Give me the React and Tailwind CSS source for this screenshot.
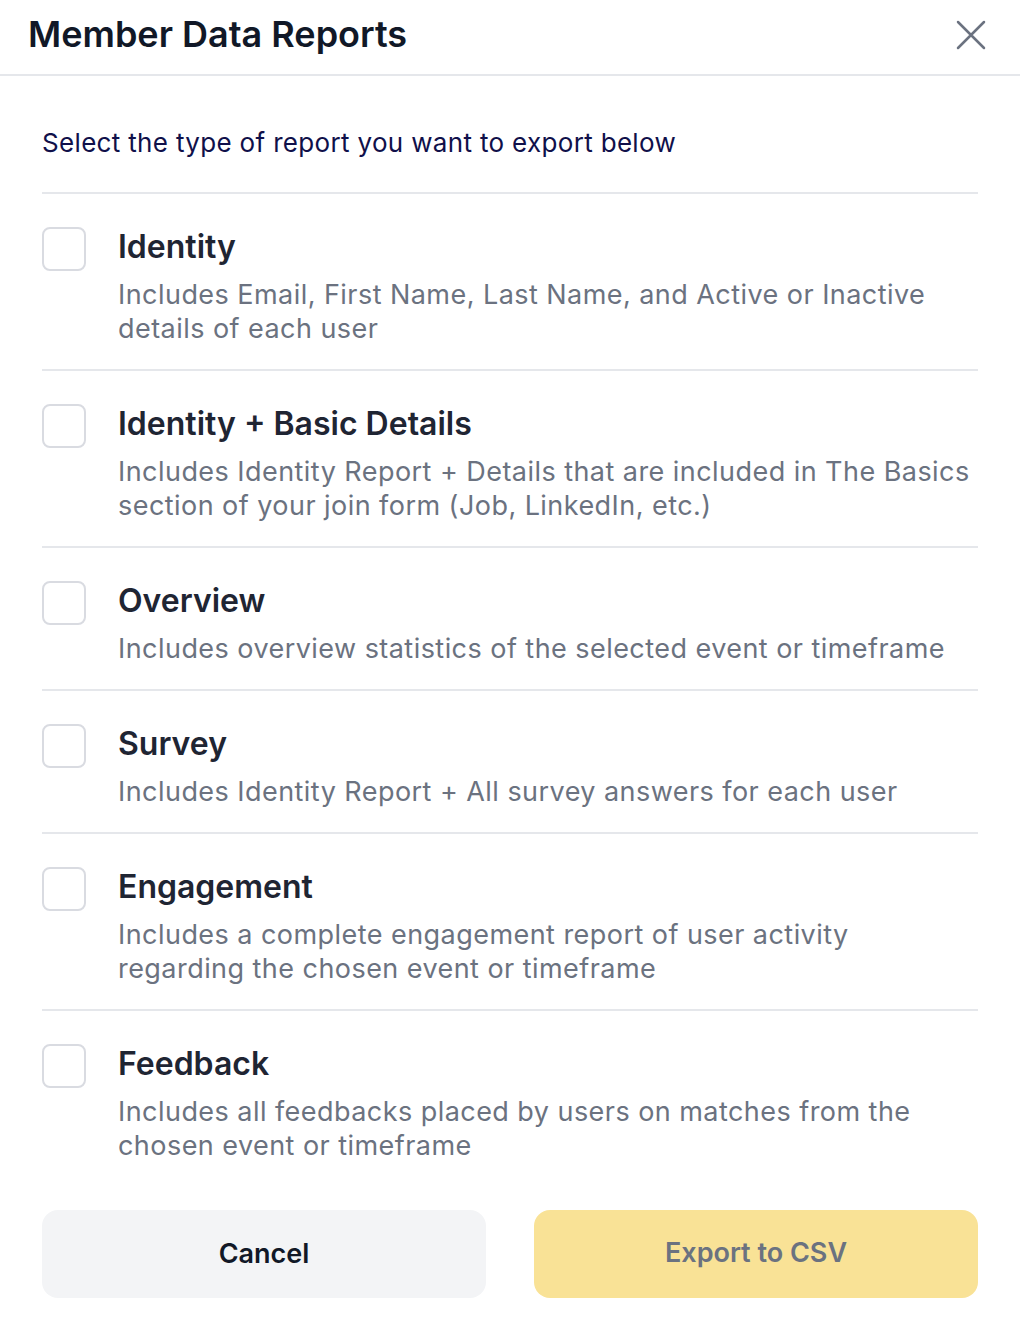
const reports = [
  {
    title: 'Identity',
    description: 'Includes Email, First Name, Last Name, and Active or Inactive details of each user',
  },
  {
    title: 'Identity + Basic Details',
    description:
      'Includes Identity Report + Details that are included in The Basics section of your join form (Job, LinkedIn, etc.)',
  },
  {
    title: 'Overview',
    description: 'Includes overview statistics of the selected event or timeframe',
  },
  {
    title: 'Survey',
    description: 'Includes Identity Report + All survey answers for each user',
  },
  {
    title: 'Engagement',
    description: 'Includes a complete engagement report of user activity regarding the chosen event or timeframe',
  },
  {
    title: 'Feedback',
    description: 'Includes all feedbacks placed by users on matches from the chosen event or timeframe',
  },
];

function App() {
  return (
    <div className="min-h-screen w-full bg-white font-['Inter',sans-serif]">
      {/* Header */}
      <div className="h-[76px] flex items-center justify-between pl-[28px] pr-[34px] border-b-2 border-[#e5e7eb]">
        <h1 className="text-[36px] leading-[40px] font-semibold text-[#111827] pb-[6px]">Member Data Reports</h1>
        <button className="text-[#6b7280] pb-[4px]">
          <svg width="30" height="30" viewBox="0 0 30 30" fill="none" stroke="currentColor" strokeWidth="2.5" strokeLinecap="round">
            <path d="M2 2L28 28M28 2L2 28" />
          </svg>
        </button>
      </div>

      {/* Content */}
      <div className="px-[42px]">
        <p className="pt-[50px] pb-[32px] text-[26px] leading-[34px] text-[#10104a] tracking-[0.33px] border-b-2 border-[#e5e7eb]">
          Select the type of report you want to export below
        </p>

        {reports.map((report, i) => (
          <div
            key={report.title}
            className={`flex gap-[32px] pt-[33px] pb-[23px] ${i < reports.length - 1 ? 'border-b-2 border-[#e5e7eb]' : ''}`}
          >
            <div className="w-[44px] h-[44px] shrink-0 rounded-[8px] border-2 border-[#d9dbe1] bg-white" />
            <div>
              <div className="text-[32px] leading-[40px] font-semibold text-[#1f2533]">{report.title}</div>
              <div className="mt-[11px] text-[27px] leading-[34px] text-[#6b7280] tracking-[0.45px]">{report.description}</div>
            </div>
          </div>
        ))}

        <div className="grid grid-cols-2 gap-[48px] pt-[24px]">
          <button className="h-[88px] rounded-[16px] bg-[#f3f4f6] text-[27px] font-semibold text-[#111827]">Cancel</button>
          <button className="h-[88px] rounded-[16px] bg-[#f9e296] text-[27px] font-semibold text-[#6b7280] pb-[2px]">Export to CSV</button>
        </div>
      </div>
    </div>
  );
}

export default App;
